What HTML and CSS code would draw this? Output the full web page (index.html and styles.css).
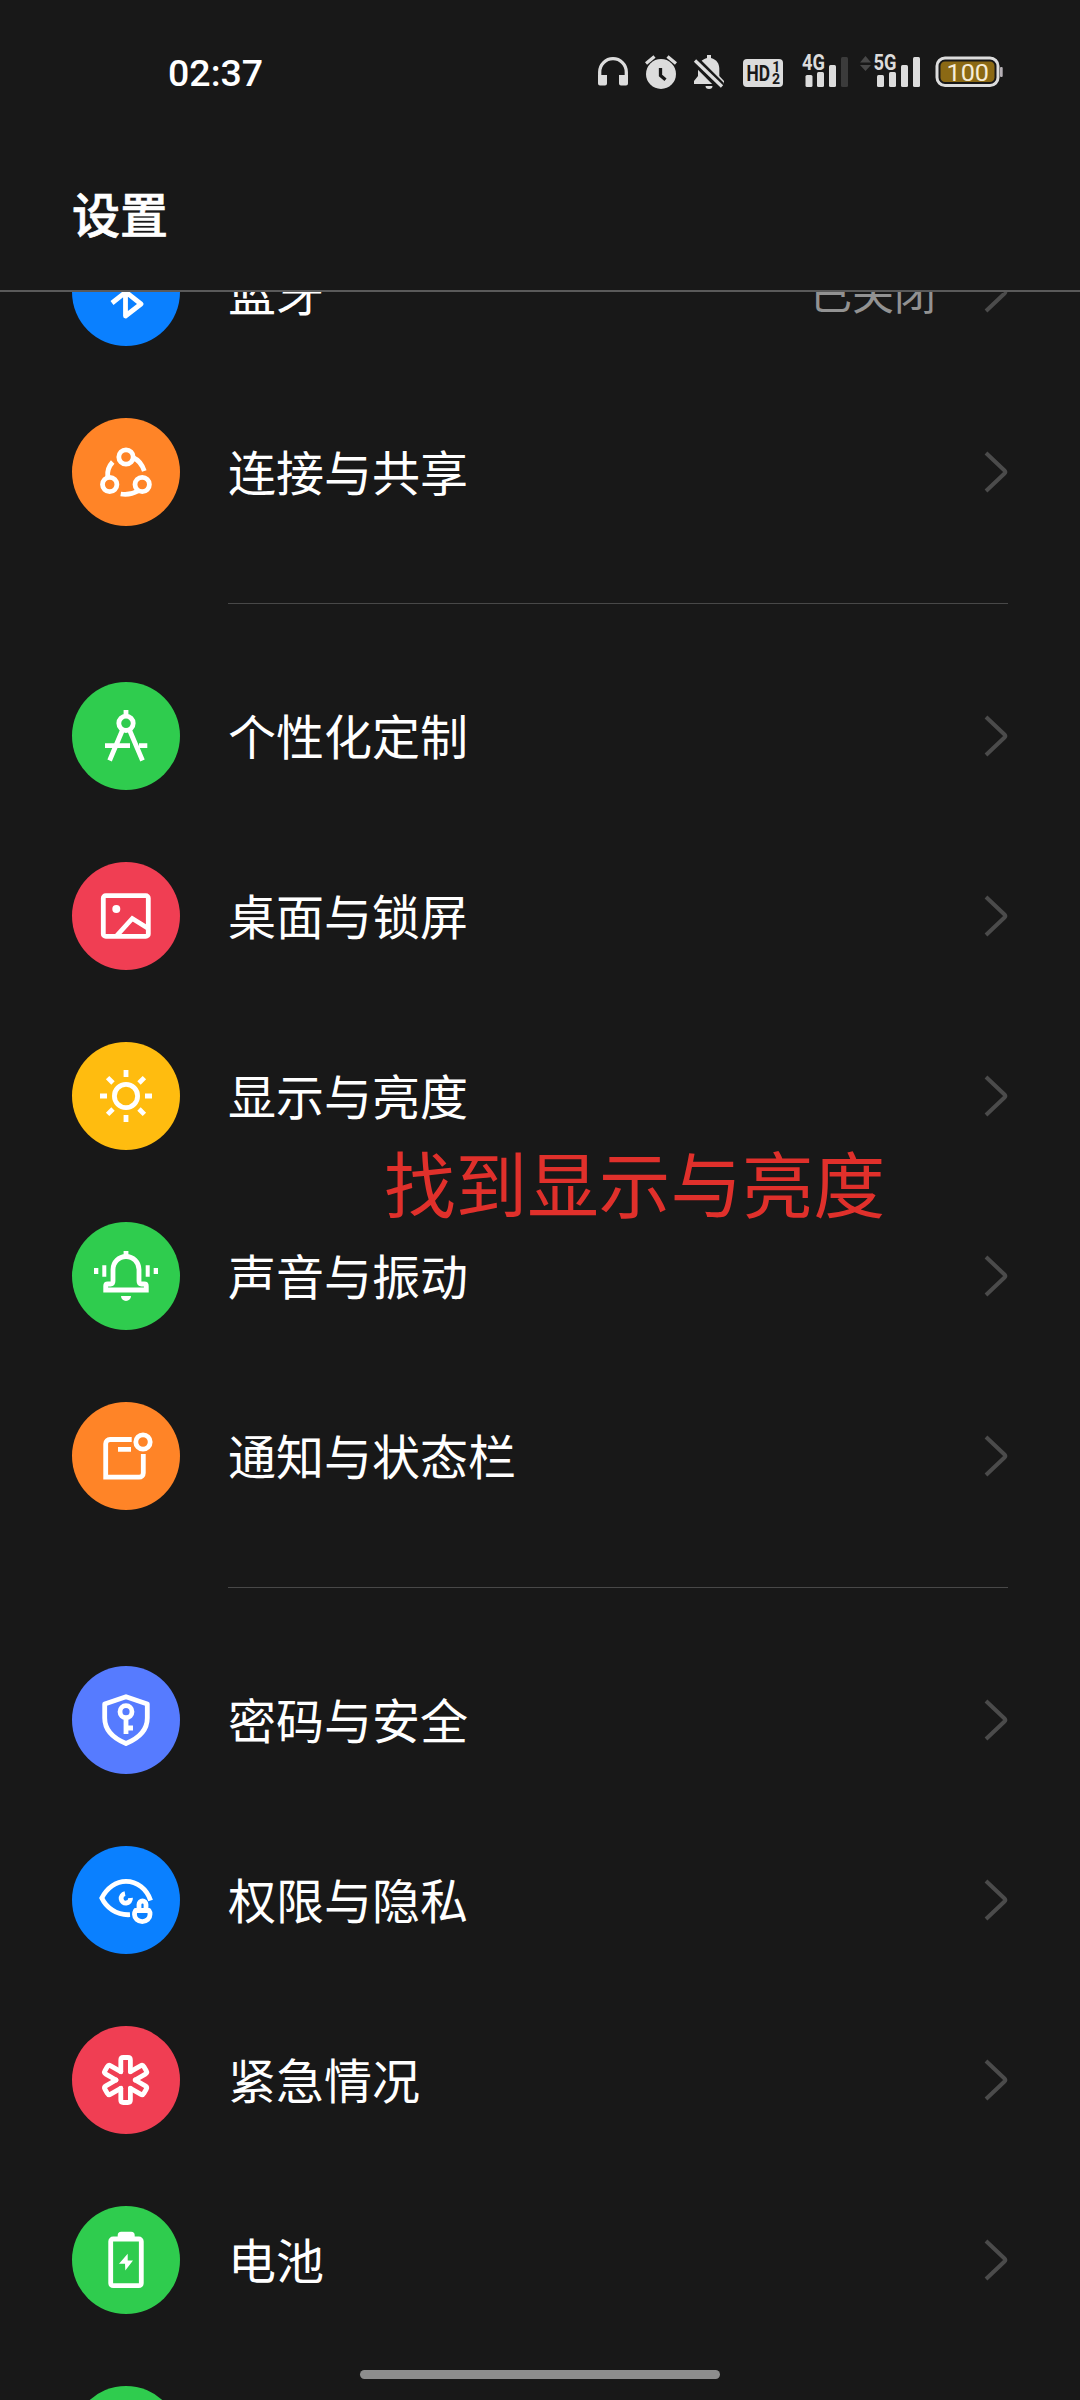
FILE: index.html
```html
<!DOCTYPE html>
<html lang="zh-CN">
<head>
<meta charset="utf-8">
<title>设置</title>
<link rel="stylesheet" href="styles.css">
</head>
<body>
<svg class="defs" width="0" height="0" aria-hidden="true">
  <symbol id="chevron" viewBox="0 0 24 44"><path d="M2 3 L20.500 20.500 Q22 22 20.500 23.500 L2 41" fill="none" stroke="#4b4b4b" stroke-width="4"/></symbol>
  <path id="arm" d="M-4.800-8.300V-20q0-2.500 2.500-2.500h4.600q2.500 0 2.500 2.500V-8.300" stroke-linecap="round"/>
</svg>
<div class="screen">
  <header class="top">
    <div class="status">
      <span class="clock">02:37</span>
      <div class="indicators">
        <svg width="32" height="40" viewBox="17 12 32 40"><path d="M19.700 40V32a13.300 13.300 0 0 1 26.600 0v8" fill="none" stroke="#dcdcdc" stroke-width="3.300"/><path d="M18 35h9v8.500a2 2 0 0 1-2 2h-5a2 2 0 0 1-2-2zM39 35h9v8.500a2 2 0 0 1-2 2h-5a2 2 0 0 1-2-2z" fill="#dcdcdc"/></svg>
        <svg class="g16" width="32" height="40" viewBox="65 12 32 40"><circle cx="81" cy="34" r="15" fill="#dcdcdc"/><path d="M66 23.500 74.500 16.500M96 23.500 87.500 16.500" stroke="#dcdcdc" stroke-width="3.300"/><path d="M80.500 28v7.500l5 4.200" fill="none" stroke="#181818" stroke-width="3.300"/></svg>
        <svg class="g16" width="32" height="40" viewBox="113 12 32 40"><path d="M127 15h4v3c6 1.500 8.300 6 8.300 10.500V36l4.700 5v3h-30v-3l4-5v-7.500c0-4.500 3-9 9-10.500z" fill="#dcdcdc"/><path d="M125.500 46h7a3.500 3 0 0 1-7 0z" fill="#dcdcdc"/><path d="M113 18.500 141 46.500" stroke="#181818" stroke-width="9"/><path d="M115 20.500 142 46.500" stroke="#dcdcdc" stroke-width="3.300"/></svg>
        <svg class="g17" width="42" height="40" viewBox="162 12 42 40"><rect x="163" y="19" width="40" height="28" rx="4" fill="#dcdcdc"/><text x="166.500" y="41" class="hd" textLength="23.500" lengthAdjust="spacingAndGlyphs">HD</text><text x="192.300" y="31.500" class="sim">1</text><text x="192" y="44" class="sim">2</text></svg>
        <svg class="g17" width="48" height="40" viewBox="221 12 48 40"><g fill="#dcdcdc"><rect x="225.500" y="35" width="7" height="12" rx="1.500"/><rect x="237" y="32" width="7" height="15" rx="1.500"/><rect x="249" y="25" width="7" height="22" rx="1.500"/></g><rect x="261" y="17" width="7" height="30" rx="1.500" fill="#3b3b3b"/><text x="222" y="30" class="net" textLength="23" lengthAdjust="spacingAndGlyphs">4G</text></svg>
        <svg class="g11" width="61" height="40" viewBox="280 12 61 40"><path d="M280 22.500 285.500 16 291 22.500zM280 25 285.500 31 291 25z" fill="#484848"/><g fill="#dcdcdc"><rect x="297" y="35" width="7" height="12" rx="1.500"/><rect x="309" y="32" width="7" height="15" rx="1.500"/><rect x="321" y="25" width="7" height="22" rx="1.500"/><rect x="333" y="17" width="7" height="30" rx="1.500"/></g><text x="293.500" y="30" class="net" textLength="23" lengthAdjust="spacingAndGlyphs">5G</text></svg>
        <svg class="g14" width="70" height="40" viewBox="355 12 70 40"><rect x="357" y="18" width="61" height="27.500" rx="8" fill="none" stroke="#dcdcdc" stroke-width="3"/><rect x="360.500" y="21.500" width="54" height="20.500" rx="4.500" fill="#8b6914"/><rect x="420" y="27" width="2.700" height="10" rx="1" fill="#b5afb5"/><text x="366.500" y="41" class="pct" textLength="42.500" lengthAdjust="spacingAndGlyphs">100</text></svg>
      </div>
    </div>
    <h1>设置</h1>
  </header>

  <main class="list">
    <section class="group first">
      <div class="row"><span class="badge blue"><svg viewBox="0 0 108 108"><path d="M40 65 69 42 53.500 30V78L69 66 40 43" stroke-linejoin="round"/></svg></span><span class="label">蓝牙</span><span class="value">已关闭</span><svg class="chev"><use href="#chevron"/></svg></div>
      <div class="row"><span class="badge orange"><svg viewBox="0 0 108 108"><circle cx="54" cy="39" r="7.200"/><circle cx="37.700" cy="66.500" r="7.200"/><circle cx="70.200" cy="66.500" r="7.200"/><path d="M35.700 59C35 53 37 48 40.700 44M61 39.500Q69 43 72.300 53M48.700 76Q58 77.500 66 73"/></svg></span><span class="label">连接与共享</span><svg class="chev"><use href="#chevron"/></svg></div>
    </section>

    <section class="group">
      <div class="row"><span class="badge green"><svg viewBox="0 0 108 108"><circle cx="54" cy="41.300" r="7.200"/><path d="M54 28v6M50.500 48 37.600 78.500M57.500 48 70.500 78.500M33 63.700H58M67 63.700H75.300"/></svg></span><span class="label">个性化定制</span><svg class="chev"><use href="#chevron"/></svg></div>
      <div class="row"><span class="badge red"><svg viewBox="0 0 108 108"><rect x="31.300" y="33.700" width="45" height="40.700" rx="2.500"/><circle class="solid" cx="44.300" cy="47" r="4"/><path d="M44 74.500 60.300 56.500 76.300 66.500"/></svg></span><span class="label">桌面与锁屏</span><svg class="chev"><use href="#chevron"/></svg></div>
      <div class="row"><span class="badge yellow"><svg viewBox="0 0 108 108"><circle cx="54" cy="54" r="11.600"/><path d="M54 28v7M54 73v7M28 54h7M73 54h7M35.600 35.600 41 41M67 67 72.400 72.400M35.600 72.400 41 67M67 41 72.400 35.600"/></svg></span><span class="label">显示与亮度</span><svg class="chev"><use href="#chevron"/></svg></div>
      <div class="row"><span class="badge green"><svg viewBox="0 0 108 108"><path d="M33.700 68V64q0-2 2-2H38.500q2.500 0 2.500-3V47.500a13 13 0 0 1 26 0V59q0 3 2.500 3h2.800q2 0 2 2v4zM54 29v5"/><path class="solid" d="M49 74h10a5 5 0 0 1-10 0zM30.300 43.300h4v11.400h-4zM22 46h4.300v6H22zM73.700 43.300h4v11.400h-4zM81.700 46h4.300v6h-4.300z"/></svg></span><span class="label">声音与振动</span><svg class="chev"><use href="#chevron"/></svg></div>
      <div class="row"><span class="badge orange"><svg viewBox="0 0 108 108"><path d="M59.700 37.500H38a4.300 4.300 0 0 0-4.300 4.300V75.200H67a4.300 4.300 0 0 0 4.300-4.300V52M46 47.300H59"/><circle cx="71" cy="40" r="7.200"/></svg></span><span class="label">通知与状态栏</span><svg class="chev"><use href="#chevron"/></svg></div>
    </section>

    <section class="group">
      <div class="row"><span class="badge indigo"><svg viewBox="0 0 108 108"><path stroke-linejoin="round" d="M54 30.700 75.300 38V52C75.300 65 65 73 54 77.500 43 73 32.700 65 32.700 52V38z"/><circle cx="54" cy="45.700" r="6"/><path d="M54 52V68M54 62H61"/></svg></span><span class="label">密码与安全</span><svg class="chev"><use href="#chevron"/></svg></div>
      <div class="row"><span class="badge blue"><svg viewBox="0 0 108 108"><path d="M58 68.700C44 69.500 34 61 29.800 52 35 42 44 35.300 54 35.300 65 35.300 75 43 78.600 54.500"/><path d="M53 47.700A4.700 4.700 0 1 0 58.500 52"/><path stroke-linejoin="round" d="M63.500 64.500H77q1.200 1.500 1 4a7.650 7 0 0 1-15.500 0q0-2.500 1-4zM67 64v-5.500a3.500 3.500 0 0 1 7 0V64"/></svg></span><span class="label">权限与隐私</span><svg class="chev"><use href="#chevron"/></svg></div>
      <div class="row"><span class="badge red"><svg viewBox="0 0 108 108"><g transform="translate(53.600 54)"><use href="#arm"/><use href="#arm" transform="rotate(60)"/><use href="#arm" transform="rotate(120)"/><use href="#arm" transform="rotate(180)"/><use href="#arm" transform="rotate(240)"/><use href="#arm" transform="rotate(300)"/></g></svg></span><span class="label">紧急情况</span><svg class="chev"><use href="#chevron"/></svg></div>
      <div class="row"><span class="badge green"><svg viewBox="0 0 108 108"><rect x="38.700" y="33" width="30.600" height="46.700" rx="2.500"/><path class="solid" d="M45.700 32v-2.700a3.500 3.500 0 0 1 3.500-3.500h10a3.500 3.500 0 0 1 3.500 3.500V32zM55.700 47.800 47 57.800h6l.3 6.700 7.700-10h-5.300z"/></svg></span><span class="label">电池</span><svg class="chev"><use href="#chevron"/></svg></div>
      <div class="row"><span class="badge green"></span></div>
    </section>
  </main>

  <div class="note">找到显示与亮度</div>
  <div class="home-bar"></div>
</div>
</body>
</html>
```
FILE: styles.css
```css
* { box-sizing: border-box; }
body { margin: 0; background: #181818; }
.defs { position: absolute; }

.screen {
  position: relative;
  display: flex;
  flex-direction: column;
  width: 1080px;
  height: 2400px;
  overflow: hidden;
  background: #181818;
  color: #fff;
  font-family: "Noto Sans CJK SC", sans-serif;
}

.top {
  flex: none;
  height: 292px;
  border-bottom: 2px solid #5a5a5a;
}
.status {
  display: flex;
  align-items: center;
  justify-content: space-between;
  height: 144px;
  padding: 0 75px 0 168px;
}
.clock {
  padding-top: 2px;
  font: 500 37.5px/40px Roboto, sans-serif;
}
.indicators { display: flex; }
.indicators svg { display: block; }
.g11 { margin-left: 11px; }
.g14 { margin-left: 14px; }
.g16 { margin-left: 16px; }
.g17 { margin-left: 17px; }
.hd { font: 700 22px Roboto, sans-serif; fill: #181818; }
.sim { font: 700 14px Roboto, sans-serif; fill: #181818; }
.net { font: 700 21.5px Roboto, sans-serif; fill: #dcdcdc; stroke: #181818; stroke-width: 2.5px; paint-order: stroke; }
.pct { font: 400 24px Roboto, sans-serif; fill: #f5ecd8; }

h1 {
  margin: 0;
  padding-left: 72px;
  font-size: 48px;
  font-weight: 500;
  line-height: 137px;
  -webkit-text-stroke: 0.7px #fff;
}

.list { flex: 1; min-height: 0; overflow: hidden; }
.first { margin-top: -90px; }
.group + .group::before {
  content: "";
  display: block;
  height: 1px;
  margin: 41px 72px 42px 228px;
  background: #484848;
}
.row {
  display: flex;
  align-items: center;
  height: 180px;
  padding: 0 72px;
}
.badge {
  flex: none;
  width: 108px;
  height: 108px;
  margin-right: 48px;
  border-radius: 50%;
}
.badge svg {
  display: block;
  fill: none;
  stroke: #fff;
  stroke-width: 4.8px;
}
.badge .solid { fill: #fff; stroke: none; }
.blue { background: #0a80ff; }
.orange { background: #ff8427; }
.green { background: #2fcc4e; }
.red { background: #f03e53; }
.yellow { background: #ffbc0f; }
.indigo { background: #567bff; }
.label { flex: 1; padding-bottom: 4px; font-size: 48px; line-height: 72px; }
.value { margin-right: 48px; padding-bottom: 2px; font-size: 42px; color: #929292; }
.chev { width: 24px; height: 44px; }

.note {
  position: absolute;
  left: 384px;
  top: 1129px;
  color: #e0302b;
  font-size: 71.6px;
  line-height: 104px;
  white-space: nowrap;
}
.home-bar {
  position: absolute;
  left: 360px;
  bottom: 21px;
  width: 360px;
  height: 9px;
  border-radius: 5px;
  background: #8d8d8d;
}
```
